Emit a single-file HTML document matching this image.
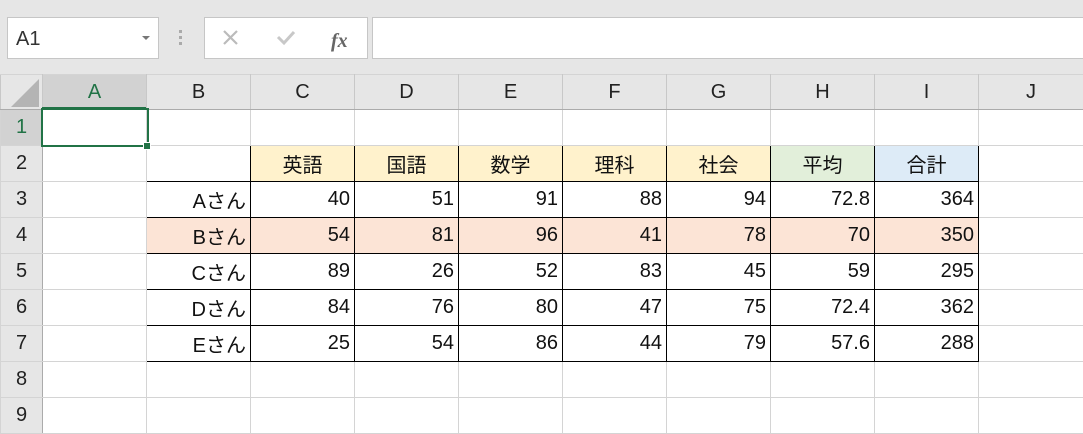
<!DOCTYPE html>
<html><head><meta charset="utf-8"><style>
body{margin:0;width:1083px;height:434px;overflow:hidden;background:#fff;font-family:"Liberation Sans","Noto Sans CJK JP",sans-serif;position:relative}
.top{position:absolute;left:0;top:0;width:1083px;height:74px;background:#e6e6e6}
.box{position:absolute;background:#fff;border:1px solid #c6c6c6;box-sizing:border-box}
table{position:absolute;left:0;top:74px;border-collapse:collapse;table-layout:fixed;width:1083px}
tr{height:36px}
td{border:1px solid #d4d4d4;height:35px;padding:0 4px;font-size:20px;color:#111;text-align:right;overflow:hidden;white-space:nowrap}
tr.h{height:35px}
tr.h td{background:#e6e6e6;text-align:center;height:34px;color:#222;border-color:#d4d4d4 #c8c8c8 #ababab #c8c8c8}
td.rh{background:#e6e6e6;text-align:center;color:#222;border-right-color:#ababab;padding:0}
td.b{border:1px solid #000}
td.y{background:#fff2cc;text-align:center}
td.g{background:#e2efda;text-align:center}
td.bl{background:#ddebf7;text-align:center}
tr.p td.b{background:#fce4d6}
</style></head><body>
<div class="top"></div>
<div class="box" style="left:7px;top:17px;width:152px;height:42px;font-size:20px;color:#333;padding:10px 0 0 8px">A1<span style="position:absolute;right:8px;top:18px;border:4px solid transparent;border-top:4px solid #777;width:0;height:0"></span></div>
<div style="position:absolute;left:179px;top:30px;width:3px;height:16px;background:repeating-linear-gradient(#aaa 0 3px,transparent 3px 6px)"></div>
<div class="box" style="left:204px;top:17px;width:164px;height:42px">
<svg width="164" height="42" style="position:absolute;left:-1px;top:-1px"><path d="M20 14l13 13M33 14l-13 13" stroke="#bbb" stroke-width="2.2" fill="none"/><path d="M74 20l6 6 10-11" stroke="#c8c8c8" stroke-width="3" fill="none"/><text x="127" y="30" font-family="Liberation Serif" font-style="italic" font-weight="bold" font-size="20" fill="#666">fx</text></svg></div>
<div class="box" style="left:372px;top:17px;width:720px;height:42px"></div>
<table>
<col style="width:42px"><col style="width:104px"><col style="width:104px"><col style="width:104px"><col style="width:104px"><col style="width:104px"><col style="width:104px"><col style="width:104px"><col style="width:104px"><col style="width:104px"><col style="width:105px">
<tr class="h"><td style="background:#e6e6e6;padding:0"><svg width="40" height="34" style="display:block"><polygon points="38,4 38,32 10,32" fill="#b4b4b4"/></svg></td><td style="background:#d2d2d2;color:#217346">A</td><td>B</td><td>C</td><td>D</td><td>E</td><td>F</td><td>G</td><td>H</td><td>I</td><td>J</td></tr>
<tr><td class="rh" style="background:#d2d2d2;color:#217346">1</td><td></td><td></td><td></td><td></td><td></td><td></td><td></td><td></td><td></td><td></td></tr>
<tr><td class="rh">2</td><td></td><td class="b"></td><td class="b y">英語</td><td class="b y">国語</td><td class="b y">数学</td><td class="b y">理科</td><td class="b y">社会</td><td class="b g">平均</td><td class="b bl">合計</td><td></td></tr>
<tr><td class="rh">3</td><td></td><td class="b">Aさん</td><td class="b">40</td><td class="b">51</td><td class="b">91</td><td class="b">88</td><td class="b">94</td><td class="b">72.8</td><td class="b">364</td><td></td></tr>
<tr class="p"><td class="rh">4</td><td></td><td class="b">Bさん</td><td class="b">54</td><td class="b">81</td><td class="b">96</td><td class="b">41</td><td class="b">78</td><td class="b">70</td><td class="b">350</td><td></td></tr>
<tr><td class="rh">5</td><td></td><td class="b">Cさん</td><td class="b">89</td><td class="b">26</td><td class="b">52</td><td class="b">83</td><td class="b">45</td><td class="b">59</td><td class="b">295</td><td></td></tr>
<tr><td class="rh">6</td><td></td><td class="b">Dさん</td><td class="b">84</td><td class="b">76</td><td class="b">80</td><td class="b">47</td><td class="b">75</td><td class="b">72.4</td><td class="b">362</td><td></td></tr>
<tr><td class="rh">7</td><td></td><td class="b">Eさん</td><td class="b">25</td><td class="b">54</td><td class="b">86</td><td class="b">44</td><td class="b">79</td><td class="b">57.6</td><td class="b">288</td><td></td></tr>
<tr><td class="rh">8</td><td></td><td></td><td></td><td></td><td></td><td></td><td></td><td></td><td></td><td></td></tr>
<tr><td class="rh">9</td><td></td><td></td><td></td><td></td><td></td><td></td><td></td><td></td><td></td><td></td></tr>
</table>
<div style="position:absolute;left:41px;top:108px;width:104px;height:35px;border:2px solid #217346"></div>
<div style="position:absolute;left:42px;top:107px;width:104px;height:2px;background:#217346"></div>
<div style="position:absolute;left:41px;top:109px;width:2px;height:36px;background:#217346"></div>
<div style="position:absolute;left:143px;top:142px;width:6px;height:6px;background:#217346;border:1px solid #fff"></div>
</body></html>
